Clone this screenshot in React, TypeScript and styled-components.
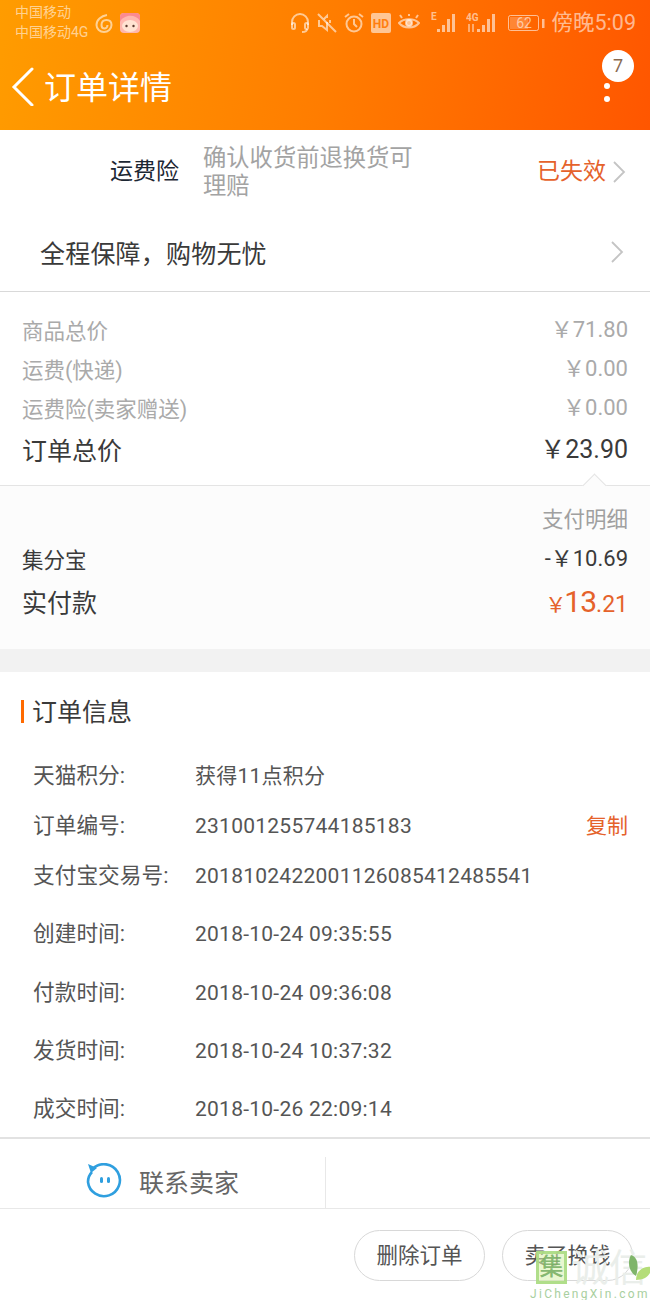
import React from 'react';
import styled, { createGlobalStyle } from 'styled-components';

const GlobalStyle = createGlobalStyle`
  html, body {
    margin: 0;
    padding: 0;
    background: #fff;
  }
  * {
    box-sizing: border-box;
  }
`;

const Page = styled.div`
  position: relative;
  width: 650px;
  height: 1300px;
  overflow: hidden;
  background: #fff;
  font-family: Roboto, 'Noto Sans CJK SC', sans-serif;
  color: #333;
`;

const Header = styled.header`
  height: 130px;
  background: linear-gradient(100deg, #ff9c00 0%, #ff7d00 50%, #ff5600 100%);
  display: flex;
  flex-direction: column;
`;

const StatusBar = styled.div`
  height: 44px;
  padding: 1px 14px 0 15px;
  display: flex;
  align-items: center;
  color: rgba(255, 255, 255, 0.58);
`;

const Carriers = styled.div`
  display: flex;
  flex-direction: column;
  font-size: 14px;
  line-height: 19.5px;
  width: 80px;
  white-space: nowrap;
`;

const StatusApps = styled.div`
  display: flex;
  align-items: center;
  gap: 7px;
`;

const StatusIcons = styled.div`
  margin-left: auto;
  display: flex;
  align-items: center;
  gap: 7px;
`;

const SignalIcon = styled.svg<{ $offset: number }>`
  margin-left: ${(p) => p.$offset}px;
`;

const BatteryIcon = styled.svg`
  margin-left: 3px;
`;

const Clock = styled.span`
  font-size: 21.5px;
  line-height: 24px;
  white-space: nowrap;
`;

const NavBar = styled.div`
  flex: 1;
  display: flex;
  align-items: center;
  padding: 0 40px 0 11px;
  margin-top: -3px;
`;

const NavTitle = styled.h1`
  margin: 4px 0 0 9px;
  font-size: 32px;
  font-weight: 400;
  line-height: 40px;
  color: #fff;
`;

const MoreWrap = styled.div`
  position: relative;
  margin-left: auto;
  width: 6px;
  height: 19px;
  margin-top: 14px;
  display: flex;
  flex-direction: column;
  justify-content: space-between;
  align-items: center;
`;

const Dot = styled.span`
  width: 6px;
  height: 6px;
  border-radius: 50%;
  background: #fff;
`;

const CountBadge = styled.span`
  position: absolute;
  left: -2px;
  top: -33px;
  width: 32px;
  height: 32px;
  border-radius: 50%;
  background: #fff;
  color: #8a6a50;
  font-size: 18px;
  line-height: 32px;
  text-align: center;
`;

const InsuranceRow = styled.div`
  height: 84px;
  padding: 14px 24px 0 110px;
  display: flex;
  align-items: flex-start;
`;

const InsuranceLabel = styled.span`
  width: 93px;
  font-size: 23px;
  line-height: 56px;
  color: #1c2733;
  flex: none;
`;

const InsuranceNote = styled.span`
  width: 212px;
  font-size: 23.3px;
  line-height: 28px;
  color: #a3a3a3;
  flex: none;
`;

const Expired = styled.span`
  margin-left: auto;
  font-size: 23px;
  line-height: 56px;
  color: #e5622b;
`;

const ChevronBox = styled.span`
  height: 56px;
  display: flex;
  align-items: center;
  margin-left: 6px;
  flex: none;
`;

const PromiseRow = styled.div`
  height: 78px;
  padding: 0 26px 2px 40px;
  display: flex;
  align-items: center;
  justify-content: space-between;
  border-bottom: 1px solid #d9d9d9;
  font-size: 25px;
  letter-spacing: 0.2px;
  color: #3a3a3a;
`;

const PriceSection = styled.section`
  height: 194px;
  padding: 18px 22px 0 22px;
  border-bottom: 1px solid #e4e4e4;
  display: flex;
  flex-direction: column;
`;

const PriceRow = styled.div<{ $height: number; $size: number; $color: string }>`
  height: ${(p) => p.$height}px;
  display: flex;
  align-items: center;
  justify-content: space-between;
  font-size: ${(p) => p.$size}px;
  color: ${(p) => p.$color};
`;

const Amount = styled.span<{ $size: number }>`
  font-size: ${(p) => p.$size}px;
  margin-top: -5px;
`;

const PayBox = styled.section`
  position: relative;
  height: 163px;
  background: #fcfcfc;
  padding: 14px 22px 0;
  display: flex;
  flex-direction: column;
`;

const Caret = styled.span`
  position: absolute;
  right: 47px;
  top: -9px;
  width: 17px;
  height: 17px;
  background: #fcfcfc;
  border-left: 1px solid #e4e4e4;
  border-top: 1px solid #e4e4e4;
  transform: rotate(45deg);
`;

const PayDetail = styled.div`
  text-align: right;
  font-size: 21.5px;
  line-height: 40px;
  color: #a0a0a0;
`;

const PayRow = styled.div<{ $height: number; $size: number }>`
  height: ${(p) => p.$height}px;
  display: flex;
  align-items: center;
  justify-content: space-between;
  font-size: ${(p) => p.$size}px;
  color: #3a3a3a;
`;

const Paid = styled.span`
  color: #e5622b;
  font-size: 23px;
  display: flex;
  align-items: baseline;
`;

const PaidYen = styled.span`
  font-size: 21px;
`;

const PaidInt = styled.span`
  font-size: 30px;
  letter-spacing: -1px;
  margin-left: -2px;
`;

const Gap = styled.div`
  height: 23px;
  background: #f2f2f2;
`;

const InfoSection = styled.section`
  height: 467px;
  border-bottom: 2px solid #e2e2e2;
`;

const InfoHeading = styled.div`
  height: 78px;
  display: flex;
  align-items: center;
  padding: 0 0 3px 21px;
  font-size: 25px;
  color: #3a3a3a;
`;

const HeadingMark = styled.span`
  width: 3px;
  height: 23px;
  background: #ff6a00;
  margin: 3px 8px 0 0;
`;

const InfoList = styled.div`
  padding: 11px 22px 0 33px;
  display: flex;
  flex-direction: column;
`;

const InfoRow = styled.div<{ $height: number }>`
  height: ${(p) => p.$height}px;
  display: flex;
  align-items: baseline;
  font-size: 21px;
  line-height: 30px;
  color: #555;
`;

const InfoKey = styled.span`
  width: 162px;
  flex: none;
  font-size: 21.7px;
`;

const InfoValue = styled.span`
  letter-spacing: 0.25px;
`;

const CopyLink = styled.span`
  margin-left: auto;
  color: #e5622b;
`;

const ContactBar = styled.div`
  height: 70px;
  border-bottom: 1px solid #e8e8e8;
  display: flex;
`;

const ContactCell = styled.div`
  width: 326px;
  margin-top: 18px;
  border-right: 1px solid #e8e8e8;
  padding: 0 0 4px 86px;
  display: flex;
  align-items: center;
  gap: 17px;
  font-size: 25px;
  color: #666;
`;

const ActionBar = styled.div`
  height: 92px;
  padding: 21px 17px 0 0;
  display: flex;
  justify-content: flex-end;
  gap: 17px;
`;

const PillButton = styled.button`
  width: 131px;
  height: 51px;
  background: #fff;
  border: 1px solid #d8d8d8;
  border-radius: 26px;
  font-family: inherit;
  font-size: 21.5px;
  line-height: 46px;
  color: #555;
  padding: 0;
`;

const Watermark = styled.div`
  position: absolute;
  left: 530px;
  top: 1250px;
  width: 120px;
  height: 50px;
  pointer-events: none;
`;

const MarkBox = styled.span`
  position: absolute;
  left: 6px;
  top: 1px;
  width: 31px;
  height: 33px;
  border: 3px solid rgba(170, 218, 130, 0.9);
  background: rgba(214, 240, 170, 0.55);
  color: rgba(120, 175, 100, 0.9);
  font-size: 24px;
  line-height: 26px;
  text-align: center;
  font-weight: 500;
`;

const MarkWords = styled.span`
  position: absolute;
  left: 41px;
  top: -2px;
  font-size: 38px;
  line-height: 40px;
  color: #eaeeea;
  white-space: nowrap;
`;

const MarkUrl = styled.span`
  position: absolute;
  left: 0;
  top: 38px;
  font-size: 12px;
  line-height: 12px;
  letter-spacing: 2.3px;
  color: #a9cfa0;
  white-space: nowrap;
`;

const MarkLeaf = styled.svg`
  position: absolute;
  left: 96px;
  top: 4px;
`;

const Chevron: React.FC = () => (
  <svg width="14" height="24" viewBox="0 0 14 24" fill="none">
    <path d="M2 2l10 10L2 22" stroke="#c4c4c4" strokeWidth="1.8" />
  </svg>
);

const StatusIconsRow: React.FC = () => (
  <StatusIcons>
    <svg width="20" height="22" viewBox="0 0 20 22" fill="none" stroke="currentColor" strokeWidth="2">
      <path d="M2 13V10a8 8 0 0116 0v3" />
      <rect x="2" y="11" width="3" height="6" rx="1.5" />
      <rect x="15" y="11" width="3" height="6" rx="1.5" />
      <path d="M17 17c0 2-2 3-5 3" />
    </svg>
    <svg width="20" height="20" viewBox="0 0 20 20" fill="none" stroke="currentColor" strokeWidth="2">
      <path d="M2 7v6h3l5 4V9M10 5V3L7 6" />
      <path d="M1 1l18 18M13 7v3" />
    </svg>
    <svg width="20" height="20" viewBox="0 0 20 20" fill="none" stroke="currentColor" strokeWidth="2">
      <circle cx="10" cy="11" r="7.5" />
      <path d="M10 6v5l3 3M1 4l4-3M19 4l-4-3" />
    </svg>
    <svg width="20" height="20" viewBox="0 0 20 20">
      <rect width="20" height="20" rx="2" fill="currentColor" />
      <text x="10" y="15" textAnchor="middle" fontSize="12" fontWeight="700" fontFamily="Roboto" fill="#ff7f10">HD</text>
    </svg>
    <svg width="22" height="20" viewBox="0 0 22 20" fill="none" stroke="currentColor" strokeWidth="2">
      <path d="M1 10c5-5 15-5 20 0-5 6-15 6-20 0z" />
      <circle cx="11" cy="10" r="3" fill="currentColor" />
      <path d="M4 5L2 2M11 3V1M18 5l2-3" />
    </svg>
    <SignalIcon $offset={4} width="28" height="22" viewBox="0 0 28 22" fill="currentColor">
      <text x="0" y="8" fontSize="10" fontWeight="700" fontFamily="Roboto">E</text>
      <rect x="6" y="17" width="3" height="3" />
      <rect x="11" y="13" width="3" height="7" />
      <rect x="16" y="7" width="3" height="13" />
      <rect x="21" y="2" width="3" height="18" />
    </SignalIcon>
    <SignalIcon $offset={0} width="32" height="22" viewBox="0 0 32 22" fill="currentColor">
      <text x="0" y="9" fontSize="10" fontWeight="700" fontFamily="Roboto">4G</text>
      <path d="M3 12v8M7 12v8" stroke="currentColor" strokeWidth="1.5" />
      <rect x="11" y="17" width="3" height="3" />
      <rect x="16" y="13" width="3" height="7" />
      <rect x="21" y="7" width="3" height="13" />
      <rect x="26" y="2" width="3" height="18" />
    </SignalIcon>
    <BatteryIcon width="37" height="18" viewBox="0 0 37 18" fill="none">
      <rect x="0.5" y="1.5" width="30" height="15" rx="2" stroke="currentColor" />
      <rect x="2" y="3" width="18" height="12" fill="currentColor" opacity="0.35" />
      <text x="16" y="14" textAnchor="middle" fontSize="14" fontFamily="Roboto" fill="currentColor">62</text>
      <rect x="34" y="5" width="2.5" height="9" fill="currentColor" />
    </BatteryIcon>
    <Clock>傍晚5:09</Clock>
  </StatusIcons>
);

const infoRows = [
  { key: '天猫积分:', value: '获得11点积分', height: 50 },
  { key: '订单编号:', value: '231001255744185183', height: 50, copy: true },
  { key: '支付宝交易号:', value: '2018102422001126085412485541', height: 58 },
  { key: '创建时间:', value: '2018-10-24 09:35:55', height: 59 },
  { key: '付款时间:', value: '2018-10-24 09:36:08', height: 58 },
  { key: '发货时间:', value: '2018-10-24 10:37:32', height: 58 },
  { key: '成交时间:', value: '2018-10-26 22:09:14', height: 40 },
];

export default function App() {
  return (
    <Page>
      <GlobalStyle />
      <Header>
        <StatusBar>
          <Carriers>
            <span>中国移动</span>
            <span>中国移动4G</span>
          </Carriers>
          <StatusApps>
            <svg width="18" height="20" viewBox="0 0 18 20" fill="none" stroke="currentColor" strokeWidth="2">
              <path d="M12 2C6 3 1.500 7 1.500 12a7.500 7 0 0015 0c0-3-2-5-5-5s-5 2-5 5 2 3.500 3 3.500 3-1 3-3.500" />
            </svg>
            <svg width="20" height="20" viewBox="0 0 20 20">
              <rect width="20" height="20" rx="4" fill="#ffb7ae" />
              <path d="M0 9C3 2 15 0 20 8V4a4 4 0 00-4-4H4a4 4 0 00-4 4z" fill="#fb8a90" />
              <ellipse cx="10" cy="13" rx="8" ry="6" fill="#ffe3d2" />
              <circle cx="6.500" cy="13" r="1.200" fill="#5a3a30" />
              <circle cx="13.500" cy="13" r="1.200" fill="#5a3a30" />
            </svg>
          </StatusApps>
          <StatusIconsRow />
        </StatusBar>
        <NavBar>
          <svg width="24" height="40" viewBox="0 0 24 40" fill="none">
            <path d="M21 3L3 21l18 18" stroke="#fff" strokeWidth="3" strokeLinecap="round" />
          </svg>
          <NavTitle>订单详情</NavTitle>
          <MoreWrap>
            <CountBadge>7</CountBadge>
            <Dot />
            <Dot />
          </MoreWrap>
        </NavBar>
      </Header>

      <InsuranceRow>
        <InsuranceLabel>运费险</InsuranceLabel>
        <InsuranceNote>确认收货前退换货可理赔</InsuranceNote>
        <Expired>已失效</Expired>
        <ChevronBox>
          <Chevron />
        </ChevronBox>
      </InsuranceRow>
      <PromiseRow>
        <span>全程保障，购物无忧</span>
        <Chevron />
      </PromiseRow>

      <PriceSection>
        <PriceRow $height={39} $size={21.5} $color="#aaa">
          <span>商品总价</span>
          <Amount $size={22}>￥71.80</Amount>
        </PriceRow>
        <PriceRow $height={39} $size={21.5} $color="#aaa">
          <span>运费(快递)</span>
          <Amount $size={22}>￥0.00</Amount>
        </PriceRow>
        <PriceRow $height={39} $size={21.5} $color="#aaa">
          <span>运费险(卖家赠送)</span>
          <Amount $size={22}>￥0.00</Amount>
        </PriceRow>
        <PriceRow $height={44} $size={25} $color="#3a3a3a">
          <span>订单总价</span>
          <Amount $size={25}>￥23.90</Amount>
        </PriceRow>
      </PriceSection>

      <PayBox>
        <Caret />
        <PayDetail>支付明细</PayDetail>
        <PayRow $height={36} $size={21.5}>
          <span>集分宝</span>
          <Amount $size={22}>-￥10.69</Amount>
        </PayRow>
        <PayRow $height={50} $size={25}>
          <span>实付款</span>
          <Paid>
            <PaidYen>￥</PaidYen>
            <PaidInt>13</PaidInt>.21
          </Paid>
        </PayRow>
      </PayBox>
      <Gap />

      <InfoSection>
        <InfoHeading>
          <HeadingMark />
          订单信息
        </InfoHeading>
        <InfoList>
          {infoRows.map((row) => (
            <InfoRow key={row.key} $height={row.height}>
              <InfoKey>{row.key}</InfoKey>
              <InfoValue>{row.value}</InfoValue>
              {row.copy && <CopyLink>复制</CopyLink>}
            </InfoRow>
          ))}
        </InfoList>
      </InfoSection>

      <ContactBar>
        <ContactCell>
          <svg width="36" height="36" viewBox="0 0 36 36" fill="none">
            <path d="M7 5.500A16 16 0 112 19c0-4 1-7 4-10" stroke="#2f9fdf" strokeWidth="2.600" />
            <path d="M2 1l9 4-6 5z" fill="#2f9fdf" />
            <rect x="14" y="14" width="3" height="6" rx="1.500" fill="#2f9fdf" />
            <rect x="21" y="14" width="3" height="6" rx="1.500" fill="#2f9fdf" />
          </svg>
          <span>联系卖家</span>
        </ContactCell>
      </ContactBar>
      <ActionBar>
        <PillButton>删除订单</PillButton>
        <PillButton>卖了换钱</PillButton>
      </ActionBar>

      <Watermark>
        <MarkWords>诚信</MarkWords>
        <MarkBox>集</MarkBox>
        <MarkLeaf width="30" height="30" viewBox="0 0 30 30">
          <path d="M5 1c7 2 8 11 5 21C3 18 1 8 5 1z" fill="#7fb56a" />
          <path d="M10 26c0-8 6-15 16-13-1 8-7 13-16 13z" fill="#b4dd78" />
        </MarkLeaf>
        <MarkUrl>JiChengXin.com</MarkUrl>
      </Watermark>
    </Page>
  );
}
